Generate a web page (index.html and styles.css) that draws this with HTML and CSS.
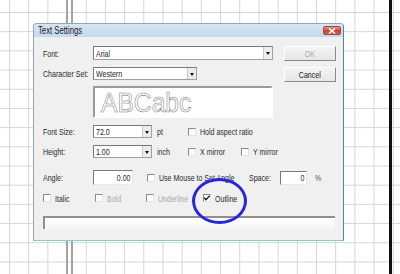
FILE: index.html
```html
<!DOCTYPE html>
<html>
<head>
<meta charset="utf-8">
<link rel="stylesheet" href="styles.css">
</head>
<body>
<div class="dialog">
  <div class="titlebar">
    <span class="t title">Text Settings</span>
    <span class="close"><svg width="8" height="6" viewBox="0 0 8 6"><path d="M1 0.5 L7 5.5 M7 0.5 L1 5.5" stroke="#fff" stroke-width="1.6"/></svg></span>
  </div>
  <div class="client">
    <div class="top">
      <div class="leftcol">
        <div class="row r-font">
          <span class="label"><span class="t">Font:</span></span>
          <div class="combo wide"><span class="t val">Arial</span><span class="arrow"></span></div>
        </div>
        <div class="row r-charset">
          <span class="label"><span class="t">Character Set:</span></span>
          <div class="combo mid"><span class="t val">Western</span><span class="arrow"></span></div>
        </div>
        <div class="row r-preview">
          <span class="label"></span>
          <div class="preview"><span class="outline-text">ABCabc</span></div>
        </div>
      </div>
      <div class="rightcol">
        <div class="btn disabled"><span class="t tc">OK</span></div>
        <div class="btn"><span class="t tc">Cancel</span></div>
      </div>
    </div>
    <div class="row r-size">
      <span class="label"><span class="t">Font Size:</span></span>
      <div class="combo small"><span class="t val">72.0</span><span class="arrow"></span></div>
      <span class="unit"><span class="t">pt</span></span>
      <label class="check"><span class="box"></span><span class="t">Hold aspect ratio</span></label>
    </div>
    <div class="row r-height">
      <span class="label"><span class="t">Height:</span></span>
      <div class="combo small"><span class="t val">1.00</span><span class="arrow"></span></div>
      <span class="unit"><span class="t">inch</span></span>
      <label class="check c-x"><span class="box"></span><span class="t">X mirror</span></label>
      <label class="check"><span class="box"></span><span class="t">Y mirror</span></label>
    </div>
    <div class="row r-angle">
      <span class="label"><span class="t">Angle:</span></span>
      <div class="field angle"><span class="t tr">0.00</span></div>
      <label class="check c-mouse"><span class="box"></span><span class="t">Use Mouse to Set Angle</span></label>
      <span class="space-label"><span class="t">Space:</span></span>
      <div class="field space"><span class="t tr">0</span></div>
      <span class="pct"><span class="t">%</span></span>
    </div>
    <div class="row r-checks">
      <label class="check c-italic"><span class="box"></span><span class="t">Italic</span></label>
      <label class="check c-bold disabled"><span class="box"></span><span class="t">Bold</span></label>
      <label class="check c-under disabled"><span class="box"></span><span class="t">Underline</span></label>
      <label class="check"><span class="box checked"><svg width="8" height="8" viewBox="0 0 8 8"><path d="M1.2 3.8 L3 5.8 L6.8 1.6" fill="none" stroke="#111" stroke-width="1.3"/></svg></span><span class="t">Outline</span></label>
    </div>
    <div class="status"></div>
  </div>
</div>
<div class="circle"></div>
</body>
</html>
```
FILE: styles.css
```css
html, body {
  margin: 0;
  padding: 0;
}
body {
  width: 400px;
  height: 274px;
  overflow: hidden;
  position: relative;
  box-sizing: border-box;
  padding: 23px 0 0 33px;
  background-color: #fff;
  background-image:
    linear-gradient(to right, transparent 389px, #111 389px, #111 392px, transparent 392px),
    linear-gradient(to right, transparent 66px, #a8a2a2 66px, #a8a2a2 68px, transparent 68px, transparent 71px, #a8a2a2 71px, #a8a2a2 73px, transparent 73px),
    linear-gradient(to right, #d4d4d4 1px, transparent 1px),
    linear-gradient(to bottom, #d4d4d4 1px, transparent 1px);
  background-size: 400px 274px, 400px 274px, 19.2px 19.2px, 19.2px 19.2px;
  background-position: 0 0, 0 0, 9px 0, 0 12px;
  background-repeat: no-repeat, no-repeat, repeat, repeat;
  font-family: "Liberation Sans", Arial, sans-serif;
  font-size: 9.5px;
  color: #2a2a2a;
}
.t {
  display: inline-block;
  white-space: nowrap;
  transform: scaleX(0.74);
  transform-origin: left center;
}
.t.tr { transform-origin: right center; }
.t.tc { transform-origin: center center; }
.dialog {
  width: 311px;
  height: 218px;
  box-sizing: border-box;
  background: #f0f0f0;
  border: 1px solid #8fa6bd;
  border-right-color: #4f8796;
  border-bottom-color: #86cbd8;
  border-radius: 4px 4px 0 0;
  display: flex;
  flex-direction: column;
}
.titlebar {
  height: 13px;
  background: linear-gradient(#d7e4f3, #c6d8ed);
  display: flex;
  align-items: center;
  justify-content: space-between;
  padding: 0 2px 0 4px;
  border-radius: 3px 3px 0 0;
}
.title {
  font-size: 10px;
  color: #1a1a1a;
  transform: scaleX(0.77);
}
.close {
  width: 18px;
  height: 9px;
  border-radius: 2px;
  background: linear-gradient(#e3998c, #c4432f 55%, #d0624c);
  border: 1px solid #9a4a40;
  box-sizing: border-box;
  display: flex;
  align-items: center;
  justify-content: center;
}
.client {
  padding: 9px 0 0 9px;
  display: flex;
  flex-direction: column;
}
.top {
  display: flex;
  gap: 11px;
}
.leftcol {
  width: 230px;
  display: flex;
  flex-direction: column;
}
.rightcol {
  display: flex;
  flex-direction: column;
  gap: 6px;
}
.row {
  display: flex;
  align-items: center;
}
.label {
  width: 50px;
  flex: none;
}
.r-font { height: 14px; }
.r-charset { height: 13px; margin-top: 7px; }
.r-preview { margin-top: 6px; align-items: stretch; }
.r-size { height: 13px; margin-top: 7px; }
.r-height { height: 13px; margin-top: 7px; }
.r-angle { height: 15px; margin-top: 12px; }
.r-checks { height: 10px; margin-top: 8px; }

.combo {
  height: 100%;
  box-sizing: border-box;
  background: #fff;
  border: 1px solid #a0a0a0;
  border-top-color: #7a7a7a;
  border-left-color: #7a7a7a;
  display: flex;
  align-items: center;
  justify-content: space-between;
  padding-left: 2px;
}
.combo.wide { width: 180px; }
.combo.mid { width: 104px; }
.combo.small { width: 59px; }
.val { color: #222; }
.arrow {
  width: 9px;
  height: 100%;
  box-sizing: border-box;
  background: #ececec;
  border-left: 1px solid #c8c8c8;
  position: relative;
}
.arrow::after {
  content: "";
  position: absolute;
  left: 2px;
  top: 50%;
  margin-top: -1px;
  border-left: 2.5px solid transparent;
  border-right: 2.5px solid transparent;
  border-top: 3px solid #111;
}
.preview {
  width: 180px;
  height: 32px;
  box-sizing: border-box;
  background: #fff;
  border: 2px solid #fff;
  border-top-color: #9a9a9a;
  border-left-color: #9a9a9a;
  display: flex;
  align-items: center;
  padding-left: 6px;
  overflow: hidden;
}
.outline-text {
  font-family: "Liberation Sans", Arial, sans-serif;
  font-size: 28px;
  line-height: 28px;
  color: #fff;
  -webkit-text-stroke: 0.6px #808080;
  display: inline-block;
  transform: scaleX(0.88);
  transform-origin: left center;
  margin-top: 2px;
}
.btn {
  width: 52px;
  height: 15px;
  box-sizing: border-box;
  background: linear-gradient(#f4f4f4, #e6e6e6);
  border: 1px solid #fff;
  border-right-color: #8a8a8a;
  border-bottom-color: #8a8a8a;
  display: flex;
  align-items: center;
  justify-content: center;
  color: #222;
}
.btn.disabled { color: #a8a8a8; }
.unit {
  width: 31px;
  padding-left: 5px;
  flex: none;
}
.check {
  display: flex;
  align-items: center;
}
.box {
  width: 8px;
  height: 8px;
  box-sizing: border-box;
  background: #fff;
  border: 1px solid #e4e4e4;
  border-top-color: #8a8a8a;
  border-left-color: #8a8a8a;
  margin-right: 4px;
  flex: none;
  display: flex;
  align-items: center;
  justify-content: center;
  overflow: visible;
}
.box svg { flex: none; }
.c-x { width: 53px; }
.field {
  height: 15px;
  box-sizing: border-box;
  background: #fff;
  border: 1px solid #e8e8e8;
  border-top-color: #7a7a7a;
  border-left-color: #7a7a7a;
  display: flex;
  align-items: center;
  justify-content: flex-end;
  padding-right: 2px;
}
.field.angle { width: 40px; }
.field.space { width: 27px; height: 14px; }
.c-mouse { margin-left: 14px; width: 102px; }
.space-label { width: 31px; }
.pct { margin-left: 8px; color: #555; }
.c-italic { width: 52px; }
.c-bold { width: 51px; }
.c-under { width: 57px; }
.disabled { color: #a8a8a8; }
.status {
  margin-top: 13px;
  width: 292px;
  height: 13px;
  box-sizing: border-box;
  background: linear-gradient(#fff, #f6f6f6);
  border-top: 2px solid #8f8f8f;
  border-left: 2px solid #8f8f8f;
}
.circle {
  position: absolute;
  left: 192px;
  top: 178px;
  width: 55px;
  height: 46px;
  box-sizing: border-box;
  border: 3px solid #2626dc;
  border-radius: 50%;
}
```
